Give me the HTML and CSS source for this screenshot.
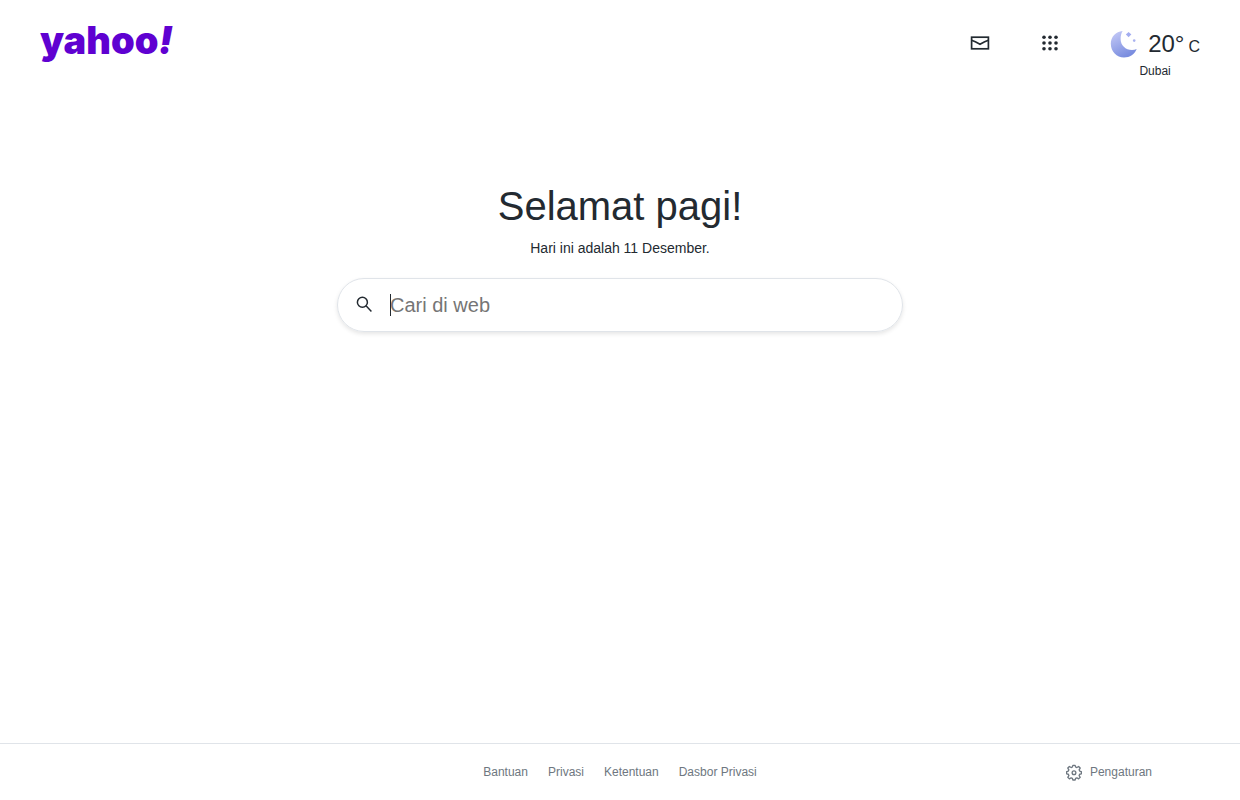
FILE: index.html
```
<!DOCTYPE html>
<html lang="id">
<head>
<meta charset="utf-8">
<meta name="viewport" content="width=device-width, initial-scale=1">
<title>Yahoo</title>
<link rel="stylesheet" href="styles.css">
</head>
<body>

<header class="header">
  <a class="logo" href="#">yahoo<span class="logo-mark">!</span></a>

  <nav class="tools">
    <a class="tool" href="#" aria-label="Mail">
      <svg width="20" height="20" viewBox="0 0 20 20" fill="none" stroke="#232a31" stroke-width="1.7">
        <rect x="1.6" y="4.2" width="16.8" height="11.6"/>
        <path d="M1.6 7.2c3 1 5.400 2.300 8.400 4 3-1.700 5.400-3 8.400-4"/>
      </svg>
    </a>
    <button class="tool" type="button" aria-label="Apps">
      <svg width="20" height="20" viewBox="0 0 20 20" fill="#232a31">
        <circle cx="4" cy="4.2" r="1.8"/><circle cx="10" cy="4.2" r="1.8"/><circle cx="16" cy="4.2" r="1.8"/>
        <circle cx="4" cy="10" r="1.8"/><circle cx="10" cy="10" r="1.8"/><circle cx="16" cy="10" r="1.8"/>
        <circle cx="4" cy="15.8" r="1.8"/><circle cx="10" cy="15.8" r="1.8"/><circle cx="16" cy="15.8" r="1.8"/>
      </svg>
    </button>
    <a class="weather" href="#">
      <span class="weather-now">
        <svg width="28" height="28" viewBox="0 0 28 28">
          <defs>
            <linearGradient id="moon" x1="0" y1="0" x2="0.5" y2="1">
              <stop offset="0" stop-color="#c9cdf8"/>
              <stop offset="1" stop-color="#7a8ddf"/>
            </linearGradient>
          </defs>
          <path fill="url(#moon)" d="M12.6 1C5.8 1.4.8 7 .8 13.8.8 21.5 6.7 27.5 14 27.5c5.8 0 10.8-3.4 12.7-8.5-1.5.7-3 1-4.7 1-6.5 0-11.4-4.7-11.4-11 0-3 .6-5.7 2-8z"/>
          <path fill="#a3adf0" d="M18.6 1.9l1.4 1.3 1.4 1.3-1.4 1.3-1.4 1.400-1.400-1.400-1.400-1.300 1.400-1.300z"/>
          <circle cx="24.2" cy="10.6" r="1.3" fill="#a9b2f0"/>
        </svg>
        <span class="degrees">20°</span>
        <span class="unit">C</span>
      </span>
      <span class="city">Dubai</span>
    </a>
  </nav>
</header>

<main class="main">
  <h1 class="greeting">Selamat pagi!</h1>
  <p class="today">Hari ini adalah 11 Desember.</p>
  <form class="search">
    <label class="search-icon" for="query" aria-label="Cari di web">
      <svg width="18" height="18" viewBox="0 0 18 18" fill="none" stroke="#232a31" stroke-width="1.5">
        <circle cx="6.4" cy="6.2" r="5"/>
        <path d="M10 9.800l5.400 5.600"/>
      </svg>
    </label>
    <div class="search-field">
      <input class="search-input" type="text" id="query" placeholder="Cari di web" autocomplete="off">
    </div>
  </form>
</main>

<footer class="footer">
  <nav class="links">
    <a href="#">Bantuan</a>
    <a href="#">Privasi</a>
    <a href="#">Ketentuan</a>
    <a href="#">Dasbor Privasi</a>
  </nav>
  <button class="settings" type="button">
    <svg width="16" height="16" viewBox="0 0 24 24" fill="none" stroke="#6e7780" stroke-width="2" stroke-linejoin="round">
      <circle cx="12" cy="13" r="2.8"/>
      <path d="M10.300 2h3.400l.7 2.500 1.900.8 2.600-1.600 2.400 2.400-1.600 2.600.8 1.900 2.500.7v3.400l-2.500.7-.8 1.900 1.600 2.600-2.400 2.400-2.600-1.600-1.900.8-.7 2.500h-3.400l-.7-2.500-1.900-.8-2.600 1.600-2.400-2.400 1.600-2.600-.8-1.900-2.500-.7v-3.400l2.500-.7.8-1.900-1.600-2.600 2.400-2.400 2.600 1.600 1.900-.8z"/>
    </svg>
    <span>Pengaturan</span>
  </button>
</footer>

</body>
</html>
```

FILE: styles.css
```
* {
  box-sizing: border-box;
}

body {
  margin: 0;
  min-height: 100vh;
  display: flex;
  flex-direction: column;
  font-family: "Liberation Sans", Arial, sans-serif;
  color: #232a31;
  background: #fff;
}

a {
  color: inherit;
  text-decoration: none;
}

button {
  font: inherit;
  color: inherit;
  border: 0;
  padding: 0;
  background: none;
  cursor: pointer;
}

svg {
  display: block;
  overflow: visible;
}

/* top bar */
.header {
  display: flex;
  justify-content: space-between;
  align-items: flex-start;
  padding: 20px 40px 0;
}

.logo {
  font-family: Inter, sans-serif;
  font-size: 38px;
  font-weight: 900;
  line-height: 40px;
  color: #5f01d1;
}

.logo-mark {
  font-style: italic;
}

.tools {
  display: flex;
  align-items: flex-start;
  gap: 50px;
}

.tool {
  padding-top: 13px;
}

.weather {
  display: flex;
  flex-direction: column;
  align-items: center;
  padding-top: 10px;
}

.weather-now {
  display: flex;
  align-items: baseline;
  height: 28px;
  line-height: 28px;
}

.weather-now svg {
  align-self: flex-start;
}

.degrees {
  margin-left: 10px;
  font-size: 24px;
}

.unit {
  margin-left: 4px;
  font-size: 16px;
}

.city {
  margin-top: 5px;
  font-size: 12px;
  line-height: 16px;
}

/* greeting and search */
.main {
  flex: 1;
  padding: 103px 20px 40px;
  text-align: center;
}

.greeting {
  margin: 0;
  font-size: 40px;
  font-weight: normal;
  line-height: 48px;
}

.today {
  margin: 8px 0 20px;
  font-size: 14px;
  line-height: 20px;
}

.search {
  display: flex;
  align-items: center;
  max-width: 566px;
  height: 54px;
  margin: 0 auto;
  padding: 0 18px;
  border: 1px solid #e0e4e9;
  border-radius: 27px;
  box-shadow: 0 2px 4px rgba(0, 0, 0, 0.1);
}

.search-field {
  position: relative;
  flex: 1;
  margin-left: 16px;
}

/* text cursor */
.search-field::before {
  content: "";
  position: absolute;
  left: 0;
  top: 0;
  width: 1px;
  height: 22px;
  background: #232a31;
}

.search-input {
  display: block;
  width: 100%;
  height: 22px;
  padding: 0;
  border: 0;
  outline: 0;
  font: inherit;
  font-size: 20px;
  color: #232a31;
  background: none;
  caret-color: transparent;
}

.search-input::placeholder {
  color: #757575;
}

/* bottom bar */
.footer {
  display: grid;
  grid-template-columns: 1fr auto 1fr;
  align-items: center;
  height: 57px;
  padding: 0 88px;
  border-top: 1px solid #e0e4e9;
  font-size: 12px;
  color: #6e7780;
}

.links {
  grid-column: 2;
  display: flex;
  gap: 20px;
}

.settings {
  justify-self: end;
  display: flex;
  align-items: center;
  gap: 8px;
}
```
